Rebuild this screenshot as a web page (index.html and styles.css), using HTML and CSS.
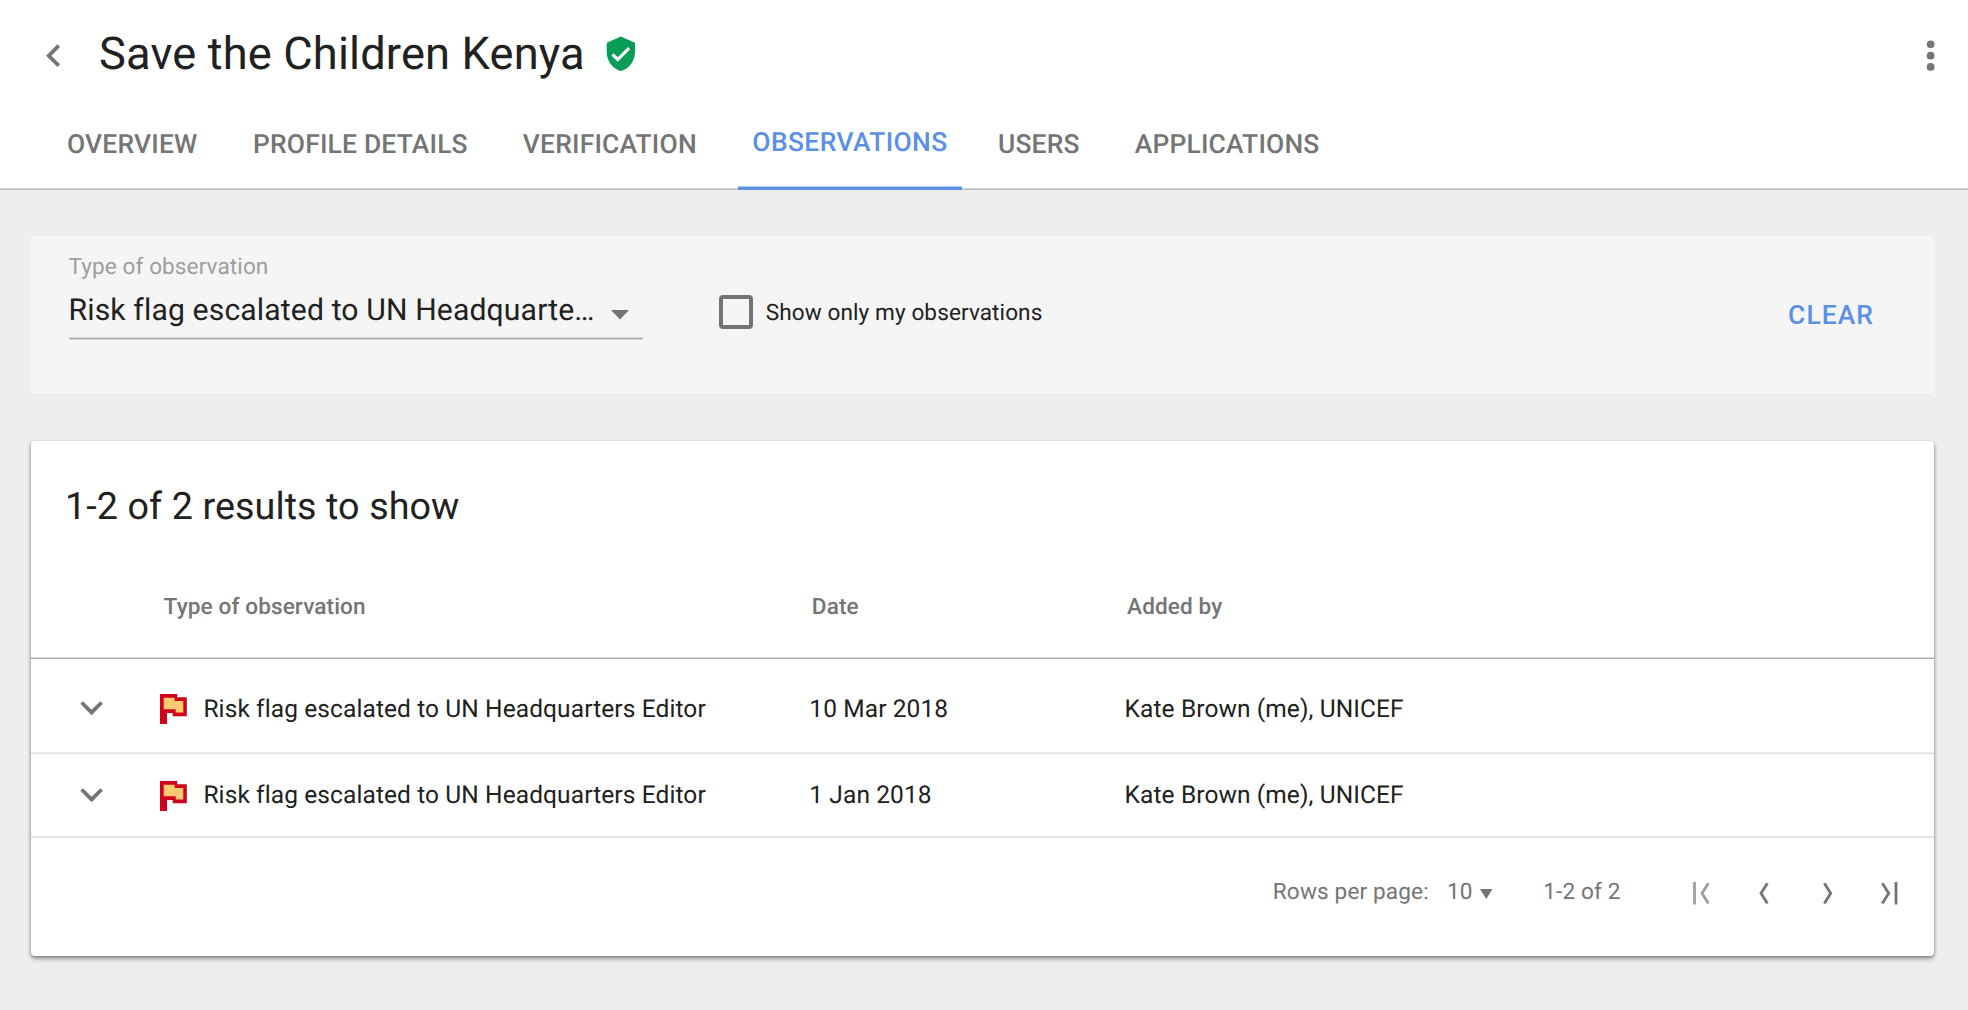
FILE: index.html
```html
<!DOCTYPE html>
<html lang="en">
<head>
<meta charset="utf-8">
<title>Save the Children Kenya – Observations</title>
<link rel="stylesheet" href="styles.css">
</head>
<body>
<header class="header">
  <div class="title-row">
    <svg class="icon back" viewBox="0 0 24 24"><path d="M15.41 7.41L14 6l-6 6 6 6 1.41-1.41L10.83 12z"/></svg>
    <h1 class="title">Save the Children Kenya</h1>
    <svg class="shield" viewBox="0 0 24 24"><path d="M12 1L3 5v6c0 5.55 3.84 10.74 9 12 5.16-1.26 9-6.45 9-12V5l-9-4zm-2 16l-4-4 1.41-1.41L10 14.17l6.59-6.59L18 9l-8 8z"/></svg>
    <svg class="icon more" viewBox="0 0 24 24"><circle cx="12" cy="6" r="2.05"/><circle cx="12" cy="12" r="2.05"/><circle cx="12" cy="18" r="2.05"/></svg>
  </div>
  <nav class="tabs">
    <a class="tab">OVERVIEW</a>
    <a class="tab">PROFILE DETAILS</a>
    <a class="tab">VERIFICATION</a>
    <a class="tab active">OBSERVATIONS</a>
    <a class="tab">USERS</a>
    <a class="tab">APPLICATIONS</a>
  </nav>
</header>
<main class="content">
  <section class="filters">
    <div class="select">
      <div class="select-label">Type of observation</div>
      <div class="select-value">
        <span>Risk flag escalated to UN Headquarte…</span>
        <svg class="caret" viewBox="0 0 18 9.5"><path d="M0 0h18L9 9.5z"/></svg>
      </div>
    </div>
    <label class="check"><span class="box"></span><span class="check-label">Show only my observations</span></label>
    <button class="clear">CLEAR</button>
  </section>
  <section class="results">
    <h2 class="count">1-2 of 2 results to show</h2>
    <div class="row head">
      <span></span>
      <span class="th">Type of observation</span>
      <span class="th">Date</span>
      <span class="th">Added by</span>
    </div>
    <div class="row first">
      <svg class="icon expand" viewBox="0 0 24 24"><path d="M16.59 8.59L12 13.17 7.41 8.59 6 10l6 6 6-6z"/></svg>
      <div class="type">
        <svg class="flag" viewBox="0 0 27 30.4"><path class="flag-edge" d="M0 0h17.3v3.2H26.8v19H12.7v-3.2H7v11.4H0z"/><path class="flag-fill" d="M3.7 3.8h11v3.1h8.6v11.6h-7.6v-3.2h-12z"/></svg>
        <span class="td">Risk flag escalated to UN Headquarters Editor</span>
      </div>
      <span class="td">10 Mar 2018</span>
      <span class="td">Kate Brown (me), UNICEF</span>
    </div>
    <div class="row">
      <svg class="icon expand" viewBox="0 0 24 24"><path d="M16.59 8.59L12 13.17 7.41 8.59 6 10l6 6 6-6z"/></svg>
      <div class="type">
        <svg class="flag" viewBox="0 0 27 30.4"><path class="flag-edge" d="M0 0h17.3v3.2H26.8v19H12.7v-3.2H7v11.4H0z"/><path class="flag-fill" d="M3.7 3.8h11v3.1h8.6v11.6h-7.6v-3.2h-12z"/></svg>
        <span class="td">Risk flag escalated to UN Headquarters Editor</span>
      </div>
      <span class="td">1 Jan 2018</span>
      <span class="td">Kate Brown (me), UNICEF</span>
    </div>
    <div class="pager">
      <span>Rows per page:</span>
      <span>10</span>
      <svg class="mini-caret" viewBox="0 0 12.5 10"><path d="M0 0h12.5L6.25 10z"/></svg>
      <span>1-2 of 2</span>
      <svg class="nav disabled" viewBox="0 0 18 23"><path d="M1.5 0v22.6M15.4 1.2L9 11.3l6.4 10.1"/></svg>
      <svg class="nav" viewBox="0 0 18 23"><path d="M8.4 1.2L2 11.3l6.4 10.1"/></svg>
      <svg class="nav" viewBox="0 0 18 23"><path d="M1.3 1.2l6.4 10.1-6.4 10.1"/></svg>
      <svg class="nav" viewBox="0 0 18 23"><path d="M1.3 1.2l6.4 10.1-6.4 10.1M15 0v22.6"/></svg>
    </div>
  </section>
</main>
</body>
</html>
```
FILE: styles.css
```css
* {
  box-sizing: border-box;
}

body {
  margin: 0;
  min-height: 1010px;
  background: #eee;
  color: #212121;
  font-family: Roboto, sans-serif;
  font-weight: 400;
  text-rendering: geometricPrecision;
}

h1, h2 {
  margin: 0;
  font-weight: 400;
}

svg {
  display: block;
  flex: none;
}

.icon {
  width: 45.25px;
  height: 45.25px;
  fill: #757575;
}

/* Header */
.header {
  height: 190px;
  background: #fff;
  border-bottom: 1px solid #b9b9b9;
  box-shadow: inset 0 -1px #d6d6d6;
}

.title-row {
  display: flex;
  align-items: flex-start;
  height: 128px;
  padding: 28px 14.5px 0 31px;
}

.back,
.more {
  margin-top: 4.7px;
}

.title {
  width: 486px;
  margin-left: 22.8px;
  font-size: 45.25px;
  line-height: 54px;
  letter-spacing: 0.14px;
  white-space: nowrap;
}

.shield {
  width: 37.7px;
  height: 37.7px;
  margin: 6.6px 0 0 16.7px;
  fill: #0a9d58;
}

.more {
  margin-left: auto;
}

.tabs {
  display: flex;
  gap: 55px;
  height: 62px;
  padding-left: 67px;
}

.tab {
  padding-top: 2px;
  color: #757575;
  font-size: 26.4px;
  font-weight: 500;
  line-height: 30px;
  letter-spacing: 0.2px;
  white-space: nowrap;
}

.tab:nth-child(2) {
  margin-left: 0.5px;
}

.tab.active {
  margin: 0 -19.2px 0 -14px;
  padding: 0 14.5px;
  border-bottom: 3px solid #5b90e5;
  box-shadow: inset 0 -1px #adc7f2;
  color: #5b90e5;
  letter-spacing: 0.4px;
}

/* Filters */
.content {
  padding: 46px 34px 0 31px;
}

.filters {
  display: flex;
  align-items: flex-start;
  height: 159px;
  padding: 18px 60px 0 38px;
  border-radius: 4px;
  background: #f5f5f5;
  box-shadow: inset 0 1px #fcfcfc, inset 0 -1px #e9e9e9;
}

.select {
  width: 574px;
  border-bottom: 1px solid #a8a8a8;
  box-shadow: 0 1px #d8d8d8, inset 0 -1px #d8d8d8;
}

.select-label {
  height: 30px;
  margin-left: -0.5px;
  color: #9e9e9e;
  font-size: 22.6px;
  line-height: 26px;
  letter-spacing: 0.08px;
}

.select-value {
  display: flex;
  justify-content: space-between;
  height: 54px;
  margin-left: -0.5px;
  padding: 9px 14px 0 0;
  font-size: 30.15px;
  line-height: 36px;
  letter-spacing: 0.13px;
  white-space: nowrap;
}

.caret {
  width: 18px;
  height: 9.5px;
  margin-top: 17px;
  fill: #757575;
}

.check {
  display: flex;
  margin: 41px 0 0 75.6px;
}

.box {
  width: 34.4px;
  height: 34.4px;
  border: 4px solid #757575;
  border-radius: 4px;
}

.check-label {
  margin-left: 12.8px;
  padding-top: 5px;
  font-size: 22.6px;
  line-height: 26px;
  letter-spacing: 0.08px;
}

.clear {
  margin: 46px 0 0 auto;
  padding: 0;
  border: 0;
  background: none;
  color: #5b90e5;
  font: 500 26.4px/30px Roboto, sans-serif;
  letter-spacing: 1.08px;
}

/* Results */
.results {
  height: 515px;
  margin-top: 46px;
  padding-top: 44px;
  border-radius: 4px;
  background: #fff;
  box-shadow: 0 3px 5px rgba(0, 0, 0, 0.3), 0 1px 3px rgba(0, 0, 0, 0.3);
}

.count {
  height: 43px;
  padding-left: 34px;
  font-size: 37.7px;
  line-height: 44px;
  letter-spacing: 0.09px;
}

.row {
  display: grid;
  grid-template-columns: 129px 649.3px 315.3px 1fr;
  align-items: start;
  height: 84px;
  padding-top: 18px;
  border-bottom: 1px solid #e0e0e0;
  box-shadow: inset 0 -1px #e6e6e6;
}

.row.head {
  height: 131px;
  padding-top: 66px;
  border-bottom-color: #a9a9a9;
  box-shadow: inset 0 -1px #dcdcdc;
}

.row.first {
  height: 95px;
  padding-top: 25.5px;
  box-shadow: inset 0 -1px #efefef;
}

.th {
  padding-left: 2.5px;
  color: #757575;
  font-size: 22.6px;
  font-weight: 500;
  line-height: 26px;
  letter-spacing: 0.1px;
}

.th:nth-child(2) {
  padding-left: 3.6px;
}

.expand {
  margin-left: 38px;
}

.type {
  display: flex;
}

.flag {
  width: 27px;
  height: 30.4px;
  margin: 9px 16.4px 0 0;
}

.flag-edge {
  fill: #d0021b;
}

.flag-fill {
  fill: #ffca70;
}

.td {
  margin-top: 9px;
  font-size: 24.5px;
  line-height: 28px;
  letter-spacing: 0.1px;
  white-space: nowrap;
}

.first .td {
  margin-top: 10.5px;
}

.pager {
  display: grid;
  grid-template-columns: 174.2px 32.6px 63.7px 149.9px 66.3px 64px 58px auto;
  align-items: start;
  padding: 41px 0 0 1241.8px;
  color: #757575;
  font-size: 22.6px;
  line-height: 26px;
  letter-spacing: 0.14px;
}

.mini-caret {
  width: 12.5px;
  height: 10px;
  margin-top: 9.8px;
  fill: #757575;
}

.nav {
  width: 18px;
  height: 23px;
  margin-top: 3px;
  fill: none;
  stroke: #757575;
  stroke-width: 2.8;
}

.nav.disabled {
  stroke: #9e9e9e;
}
```
